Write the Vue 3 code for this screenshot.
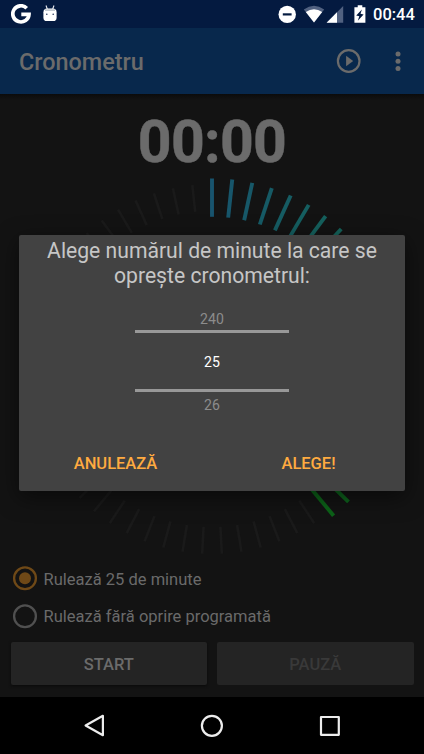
<script setup>
const TICKS = 59
const ACTIVE = 24

const stops = [
  [0, [24, 84, 110]],
  [7, [20, 98, 90]],
  [15, [16, 98, 56]],
  [23, [12, 98, 24]],
]

function colorAt(i) {
  for (let s = 1; s < stops.length; s++) {
    const [a, ca] = stops[s - 1]
    const [b, cb] = stops[s]
    if (i <= b) {
      const t = (i - a) / (b - a)
      return `rgb(${ca.map((v, k) => Math.round(v + (cb[k] - v) * t)).join(',')})`
    }
  }
  return '#1a1a1a'
}

const ticks = Array.from({ length: TICKS }, (_, i) => {
  const on = i < ACTIVE
  return {
    angle: (i * 360) / TICKS,
    y1: on ? -190.5 : -185,
    y2: on ? -152.2 : -158,
    width: on ? 3.9 : 2.6,
    color: on ? colorAt(i) : '#1a1a1a',
  }
})
</script>

<template>
  <div class="screen">
    <header class="status">
      <div class="status-side">
        <svg class="g-logo" width="20" height="20" viewBox="0 0 20 20">
          <path d="M15.700 4.200A8.100 8.100 0 1 0 18 10.300H10.300" fill="none" stroke="#fff" stroke-width="3.700" />
        </svg>
        <svg class="droid" width="14" height="17" viewBox="0 0 14 17">
          <path d="M3 .5 4.3 4M11 .5 9.7 4" stroke="#e8ebf0" stroke-width="1.1" />
          <path d="M.4 7.200C.4 4.600 2 3.600 4 3.500h6c2 .1 3.600 1.100 3.600 3.700v5.500c0 2.200-1.400 3.400-3.200 3.400H3.600C1.800 16.100.4 14.900.4 12.700Z" fill="#fff" />
          <path d="M2 5.100h10" stroke="#b8c0c8" stroke-width="1.5" />
          <circle cx="3.800" cy="9.300" r=".8" fill="#26365a" />
          <circle cx="10.200" cy="9.300" r=".8" fill="#26365a" />
        </svg>
      </div>
      <div class="status-side">
        <svg width="68" height="20" viewBox="0 0 68 20">
          <circle cx="9.200" cy="10.400" r="8.700" fill="#fff" />
          <path d="M4.800 10.400h8.800" stroke="#041a40" stroke-width="2.200" />
          <path d="M25.800 5.500Q36 -1.900 46.200 5.500L36 18.400Z" fill="#516180" />
          <path d="M27.800 8.100Q36 2.200 44.200 8.100L36 18.400Z" fill="#fff" />
          <path d="M65.200 1.900V18.700H48.600Z" fill="#516180" />
          <path d="M59 8.200V18.700H48.600Z" fill="#fff" />
        </svg>
        <svg class="battery" width="12" height="20" viewBox="0 0 12 20">
          <path d="M3.700 1.200h4.600v2h3.100v15.500H.4V3.200h3.300Z" fill="#fff" />
          <path d="M7.900 5.600 2.200 11.400 5.300 12.200 3.800 16.700 9.600 10.500 6.500 9.800Z" fill="#041a40" />
        </svg>
        <span class="clock">00:44</span>
      </div>
    </header>

    <div class="appbar">
      <h1>Cronometru</h1>
      <svg width="70" height="28" viewBox="0 0 70 28">
        <circle cx="13.700" cy="14" r="10.800" fill="none" stroke="#6b6b6b" stroke-width="2.200" />
        <path d="M11.100 8.700v10.600L18.200 14Z" fill="#6b6b6b" />
        <circle cx="63" cy="7" r="2.500" fill="#6b6b6b" />
        <circle cx="63" cy="14.200" r="2.500" fill="#6b6b6b" />
        <circle cx="63" cy="21.400" r="2.500" fill="#6b6b6b" />
      </svg>
    </div>

    <main class="content">
      <div class="time">00:00</div>
      <svg class="dial" width="384" height="384" viewBox="-192 -192 384 384">
        <line
          v-for="t in ticks"
          :key="t.angle"
          x1="0"
          x2="0"
          :y1="t.y1"
          :y2="t.y2"
          :stroke="t.color"
          :stroke-width="t.width"
          :transform="`rotate(${t.angle})`"
        />
      </svg>

      <div class="options">
        <label class="option">
          <svg width="26" height="26" viewBox="0 0 26 26">
            <circle cx="13" cy="13.300" r="10.900" fill="none" stroke="#6f4917" stroke-width="2.300" />
            <circle cx="13" cy="13.300" r="6" fill="#6f4917" />
          </svg>
          <span>Rulează 25 de minute</span>
        </label>
        <label class="option">
          <svg width="26" height="26" viewBox="0 0 26 26">
            <circle cx="13" cy="13.300" r="10.900" fill="none" stroke="#505050" stroke-width="2.300" />
          </svg>
          <span>Rulează fără oprire programată</span>
        </label>
      </div>

      <div class="buttons">
        <button class="btn start">START</button>
        <button class="btn pause">PAUZĂ</button>
      </div>
    </main>

    <nav class="nav">
      <svg width="424" height="57" viewBox="0 0 424 57" fill="none" stroke="#ececec" stroke-width="2.200">
        <path d="M102.900 18.800V38.200L85.600 28.500Z" stroke-linejoin="round" />
        <circle cx="211.900" cy="28.800" r="10" />
        <path d="M321 20h17.800v17.800H321Z" stroke-linejoin="round" />
      </svg>
    </nav>

    <section class="dialog">
      <h2>Alege numărul de minute la care se oprește cronometrul:</h2>
      <div class="picker">
        <div class="value above">240</div>
        <div class="value current">25</div>
        <div class="value below">26</div>
      </div>
      <div class="actions">
        <span>ANULEAZĂ</span>
        <span>ALEGE!</span>
      </div>
    </section>
  </div>
</template>

<style>
body {
  background: #000;
}
</style>

<style scoped>
.screen {
  position: relative;
  width: 424px;
  height: 754px;
  overflow: hidden;
  display: flex;
  flex-direction: column;
  background: #131313;
  font-family: Roboto, "Liberation Sans", sans-serif;
}
svg {
  display: block;
  flex: none;
}
.status {
  height: 28px;
  flex: none;
  box-sizing: border-box;
  padding: 0 9px 0 11px;
  display: flex;
  justify-content: space-between;
  background: #041a40;
}
.status-side {
  display: flex;
  align-items: center;
}
.droid {
  margin-left: 11.500px;
  margin-bottom: 2px;
}
.battery {
  margin-left: 7.500px;
}
.clock {
  width: 42px;
  margin-left: 7.500px;
  color: #fff;
  font-size: 16.500px;
  font-weight: 500;
  line-height: 28px;
  white-space: nowrap;
  padding-top: 2px;
}
.appbar {
  height: 66px;
  flex: none;
  box-sizing: border-box;
  padding: 0 19px;
  display: flex;
  align-items: center;
  justify-content: space-between;
  background: #08284c;
}
h1 {
  margin: 2px 0 0;
  color: #6b6b6b;
  font-size: 23.400px;
  font-weight: 500;
  line-height: 30px;
}
.content {
  height: 603px;
  flex: none;
  display: flex;
  flex-direction: column;
  align-items: center;
  background: linear-gradient(#0b0b0b, #131313 6px);
}
.time {
  height: 83px;
  padding-top: 13px;
  box-sizing: border-box;
  color: #6b6b6b;
  font-size: 59px;
  font-weight: 700;
  line-height: 70px;
  letter-spacing: -0.700px;
  -webkit-text-stroke: 0.500px #6b6b6b;
}
.dial {
  margin-bottom: -2px;
}
.options {
  width: 100%;
  box-sizing: border-box;
  padding-left: 11.600px;
  color: #6a6a6a;
  font-size: 16.500px;
}
.option {
  display: flex;
  align-items: center;
  gap: 6px;
  height: 37.700px;
}
.option span {
  padding-top: 2.500px;
}
.buttons {
  display: flex;
  gap: 10px;
  width: 403px;
  margin-top: 7.600px;
}
.btn {
  flex: 1;
  height: 42.700px;
  padding: 2px 0 0;
  border: 0;
  border-radius: 2px;
  background: #242424;
  font: 500 16.500px Roboto, sans-serif;
}
.start {
  color: #6b6b6b;
  box-shadow: 0 1px 3px #0a0a0a;
}
.pause {
  color: #393939;
}
.nav {
  height: 57px;
  flex: none;
  background: #000;
}
.dialog {
  position: absolute;
  left: 19px;
  top: 235px;
  width: 386px;
  height: 256px;
  box-sizing: border-box;
  border-radius: 2px;
  background: #424242;
  box-shadow: 0 6px 22px rgba(0, 0, 0, 0.5);
  display: flex;
  flex-direction: column;
  align-items: center;
}
h2 {
  width: 350px;
  margin: 3px 0 0;
  color: #c6c6c6;
  font-size: 21.150px;
  font-weight: 400;
  line-height: 25px;
  text-align: center;
}
.picker {
  width: 154px;
  margin-top: 19px;
  font-size: 14.100px;
  text-align: center;
}
.value {
  color: #8c8c8c;
}
.above {
  height: 23px;
  line-height: 24px;
}
.current {
  height: 56px;
  line-height: 59px;
  color: #fff;
  border-top: 2.500px solid #989898;
  border-bottom: 2.500px solid #989898;
  border-width: 3px 0;
}
.below {
  line-height: 26px;
}
.actions {
  width: 100%;
  display: grid;
  grid-template-columns: 1fr 1fr;
  margin-top: 35px;
  color: #ffab40;
  font-size: 16.500px;
  font-weight: 500;
  line-height: 22px;
  text-align: center;
}
</style>
